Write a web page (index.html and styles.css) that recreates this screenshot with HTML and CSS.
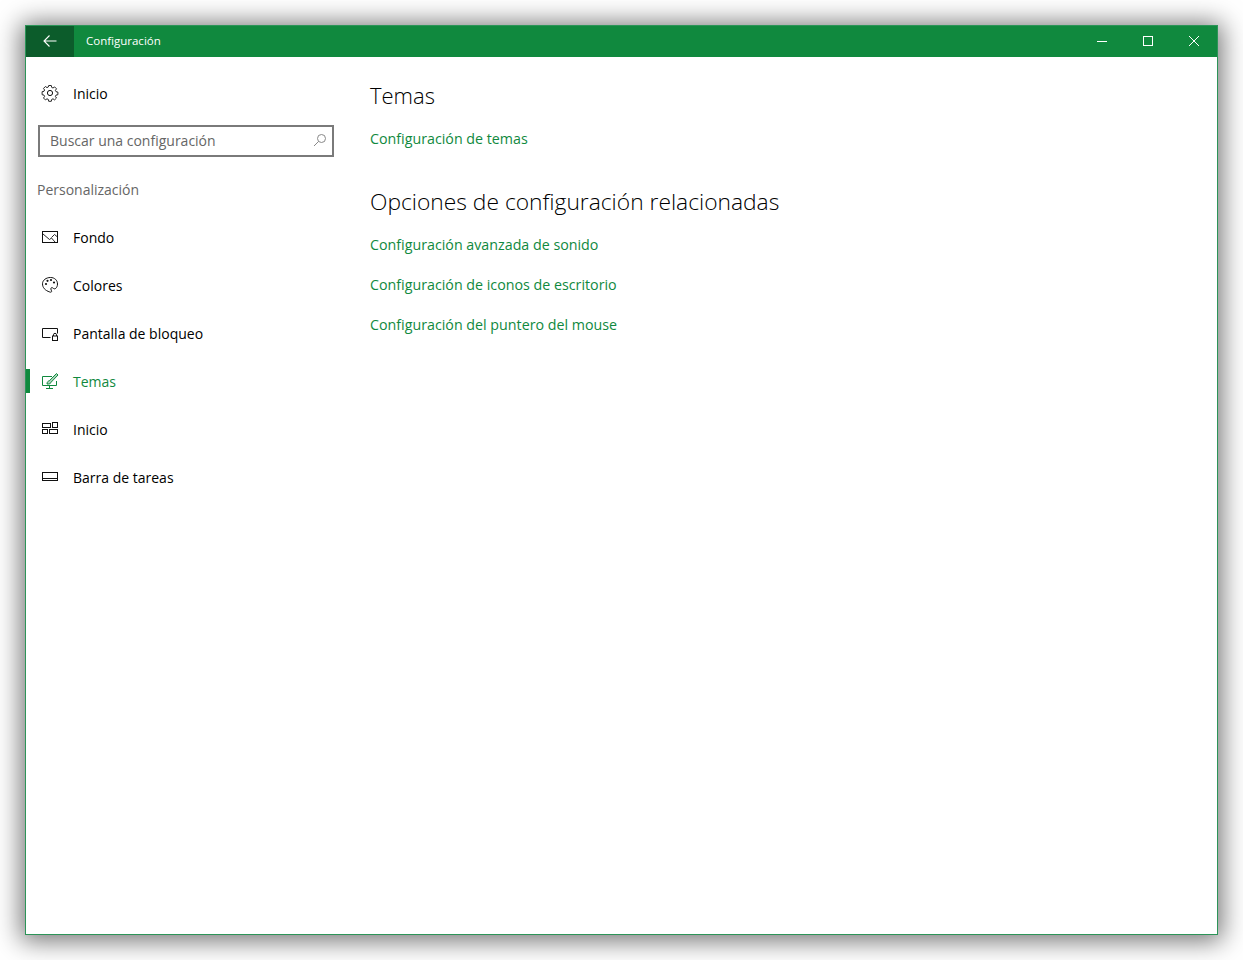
FILE: index.html
```html
<!DOCTYPE html>
<html lang="es">
<head>
<meta charset="utf-8">
<title>Configuración</title>
<link rel="stylesheet" href="styles.css">
</head>
<body>
<div class="window">
  <header class="titlebar">
    <button class="back" aria-label="Atrás">
      <svg width="14" height="14" viewBox="0 0 14 14"><path d="M6.500 .5 1 6 6.500 11.500M1 6h12.500" fill="none" stroke="#fff" stroke-width="1.100"/></svg>
    </button>
    <span class="app-title">Configuración</span>
    <div class="controls">
      <span class="ctl"><svg width="12" height="12" viewBox="0 0 12 12"><path d="M1 5.500h10" stroke="#fff" fill="none"/></svg></span>
      <span class="ctl"><svg width="12" height="12" viewBox="0 0 12 12"><rect x="1.500" y=".5" width="9" height="9" stroke="#fff" fill="none"/></svg></span>
      <span class="ctl"><svg width="12" height="12" viewBox="0 0 12 12"><path d="M1 0l10 10M11 0 1 10" stroke="#fff" fill="none"/></svg></span>
    </div>
  </header>
  <div class="body">
    <aside class="sidebar">
      <div class="nav-item home">
        <svg class="ico" width="18" height="18" viewBox="0 0 18 18"><circle cx="9" cy="9" r="2.600" fill="none" stroke="#111"/><path d="M7.700 1.500h2.600l.4 1.900 1.300.6 1.600-1.100 1.900 1.900-1.100 1.600.6 1.300 1.900.4v2.600l-1.900.4-.6 1.300 1.100 1.600-1.900 1.900-1.600-1.100-1.300.6-.4 1.900H7.700l-.4-1.900-1.300-.6-1.600 1.100-1.900-1.900 1.100-1.600-.6-1.300-1.900-.4V7.700l1.900-.4.6-1.300-1.100-1.600 1.900-1.900 1.600 1.100 1.300-.6z" fill="none" stroke="#111" stroke-width=".9"/></svg>
        <span>Inicio</span>
      </div>
      <div class="search">
        <span>Buscar una configuración</span>
        <svg width="14" height="14" viewBox="0 0 14 14"><circle cx="8.500" cy="5.500" r="4" fill="none" stroke="#888"/><path d="M5.600 8.400 1 13" stroke="#888" fill="none"/></svg>
      </div>
      <div class="section">Personalización</div>
      <nav class="nav">
        <div class="nav-item">
          <svg class="ico" width="18" height="18" viewBox="0 0 18 18"><rect x="1.500" y="3.500" width="15" height="11" fill="none" stroke="#111"/><path d="M2 6l6.500 5.500 2-1.500 3.500 4M10.500 9.500l3-3 3 2.500" fill="none" stroke="#111" stroke-width=".9"/></svg>
          <span>Fondo</span>
        </div>
        <div class="nav-item">
          <svg class="ico" width="18" height="18" viewBox="0 0 18 18"><path d="M9.500 1.500c4 0 7 2.700 7 6.500 0 2.200-.9 3.500-1.800 4.400-1 .9-2 .3-2.800-.4-.8-.7-2.100-.4-2.100.9 0 1.200.9 1.500.9 2.300 0 .8-.9 1.300-1.900.8C4 14.500 1.500 11.500 1.500 7.800c0-3.600 3.600-6.300 8-6.300z" fill="none" stroke="#111"/><g fill="#111"><circle cx="5" cy="8" r="1.100"/><circle cx="6.500" cy="4.800" r="1.100"/><circle cx="10" cy="4" r="1.100"/><circle cx="13" cy="6.500" r="1.100"/></g></svg>
          <span>Colores</span>
        </div>
        <div class="nav-item">
          <svg class="ico" width="18" height="18" viewBox="0 0 18 18"><path d="M9.500 13.500h-8v-9h15v5" fill="none" stroke="#111"/><rect x="11.500" y="12" width="5" height="4.500" fill="none" stroke="#111"/><path d="M12.500 12v-1.200a1.500 1.500 0 0 1 3 0V12" fill="none" stroke="#111"/></svg>
          <span>Pantalla de bloqueo</span>
        </div>
        <div class="nav-item active">
          <svg class="ico" width="18" height="18" viewBox="0 0 18 18"><path d="M11 4.500H1.500v9h14V9M8.500 13.500v2.500M5 16.500h7" fill="none" stroke="#10893e"/><path d="M6 12c0-2 1-3 2.300-3.200L15.500 1.500l1.500 1.500-7 7.300c-.3 1.300-1.500 1.900-4 1.700z" fill="#10893e" fill-opacity=".35" stroke="#10893e"/></svg>
          <span>Temas</span>
        </div>
        <div class="nav-item">
          <svg class="ico" width="18" height="18" viewBox="0 0 18 18"><g fill="none" stroke="#111"><rect x="1.500" y="3.500" width="8" height="4"/><rect x="11.500" y="2.500" width="5" height="5"/><rect x="1.500" y="9.500" width="5" height="4"/><rect x="8.500" y="9.500" width="8" height="4"/></g></svg>
          <span>Inicio</span>
        </div>
        <div class="nav-item">
          <svg class="ico" width="18" height="18" viewBox="0 0 18 18"><rect x="1.500" y="4.500" width="15" height="8" fill="none" stroke="#111"/><path d="M1.500 10.500h15" stroke="#111" fill="none"/></svg>
          <span>Barra de tareas</span>
        </div>
      </nav>
    </aside>
    <main class="content">
      <h2 class="h-first">Temas</h2>
      <a class="link" href="#">Configuración de temas</a>
      <h2 class="h-second">Opciones de configuración relacionadas</h2>
      <div class="links">
        <a class="link" href="#">Configuración avanzada de sonido</a>
        <a class="link" href="#">Configuración de iconos de escritorio</a>
        <a class="link" href="#">Configuración del puntero del mouse</a>
      </div>
    </main>
  </div>
</div>
</body>
</html>
```
FILE: styles.css
```css
* { box-sizing: border-box; }
html, body { margin: 0; height: 100%; background: #fff; }
body {
  padding: 25px;
  overflow: hidden;
  font-family: "Open Sans", "Noto Sans", sans-serif;
  font-size: 14px;
  color: #000;
}
.window {
  width: 1193px;
  height: 910px;
  border: 1px solid #2c9458;
  background: #fff;
  box-shadow: 0 2px 24px 4px rgba(0,0,0,.55);
  display: flex;
  flex-direction: column;
}
.titlebar {
  height: 31px;
  flex: none;
  background: #10893e;
  display: flex;
  align-items: center;
  color: #fff;
}
.back {
  width: 48px;
  height: 31px;
  border: 0;
  padding: 0;
  background: #0c5c2b;
  display: flex;
  align-items: center;
  justify-content: center;
}
.app-title { margin: 0 0 2px 12px; font-size: 11.500px; }
.controls { margin-left: auto; display: flex; }
.ctl { width: 46px; height: 31px; display: flex; align-items: center; justify-content: center; }
.body { flex: 1; display: flex; }
.sidebar { width: 344px; flex: none; padding-top: 12px; }
.nav-item {
  height: 48px;
  display: flex;
  align-items: center;
  padding-left: 15px;
  gap: 14px;
  position: relative;
}
.nav-item.active { color: #10893e; }
.nav-item.active::before {
  content: "";
  position: absolute;
  left: 0;
  top: 12px;
  width: 4px;
  height: 24px;
  background: #10893e;
}
.search {
  margin: 8px 0 0 12px;
  width: 296px;
  height: 32px;
  border: 2px solid #7a7a7a;
  display: flex;
  align-items: center;
  justify-content: space-between;
  padding: 0 5px 2px 10px;
  color: #666;
}
.section { margin: 23px 0 0 11px; color: #666; height: 33px; line-height: 20px; }
.content { flex: 1; padding-top: 19px; }
h2 { margin: 0; font-weight: 300; color: #000; }
.h-first { font-size: 22px; line-height: 38px; }
.h-second { font-size: 22.800px; line-height: 38px; margin-top: 34px; }
.link { color: #10893e; text-decoration: none; display: block; line-height: 20px; font-size: 14.250px; }
.h-first + .link { margin-top: 15px; }
.links { display: flex; flex-direction: column; gap: 20px; margin-top: 14px; }
```
